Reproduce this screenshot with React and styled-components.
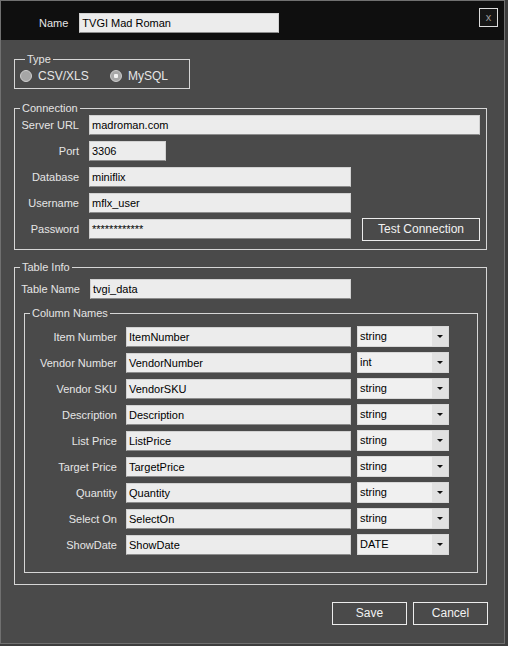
import React from 'react'
import styled, { createGlobalStyle } from 'styled-components'

const GlobalStyle = createGlobalStyle`
  html, body {
    margin: 0;
    padding: 0;
    background: #3d3d3d;
  }
  body {
    font-family: "Liberation Sans", Arial, sans-serif;
    font-size: 11px;
  }
`

const connection = [
  { label: 'Server URL', value: 'madroman.com', size: 'full' },
  { label: 'Port', value: '3306', size: 'small' },
  { label: 'Database', value: 'miniflix' },
  { label: 'Username', value: 'mflx_user' },
  { label: 'Password', value: '************', test: true },
]

const columns = [
  ['Item Number', 'ItemNumber', 'string'],
  ['Vendor Number', 'VendorNumber', 'int'],
  ['Vendor SKU', 'VendorSKU', 'string'],
  ['Description', 'Description', 'string'],
  ['List Price', 'ListPrice', 'string'],
  ['Target Price', 'TargetPrice', 'string'],
  ['Quantity', 'Quantity', 'string'],
  ['Select On', 'SelectOn', 'string'],
  ['ShowDate', 'ShowDate', 'DATE'],
]

const App = () => {
  return (
    <>
      <GlobalStyle />
      <Window>
        <Header>
          <NameField>
            <NameLabel>Name</NameLabel>
            <TextBox $width="200px">TVGI Mad Roman</TextBox>
          </NameField>
          <CloseButton>x</CloseButton>
        </Header>

        <Body>
          <Group $width="176px" $pad="3px 0 5px 5px">
            <Legend>Type</Legend>
            <RadioRow>
              <RadioOption>
                <RadioDot />
                CSV/XLS
              </RadioOption>
              <RadioOption>
                <RadioDot $checked />
                MySQL
              </RadioOption>
            </RadioRow>
          </Group>

          <Group $mt="12px" $pad="0 6px 10px 0">
            <Legend>Connection</Legend>
            <ConnGrid>
              {connection.map((row) => (
                <React.Fragment key={row.label}>
                  <FieldLabel>{row.label}</FieldLabel>
                  <TextBox
                    $span={row.size === 'full'}
                    $width={row.size === 'small' ? '77px' : undefined}
                  >
                    {row.value}
                  </TextBox>
                  {row.test && <OutlineButton $width="118px" $ml="1px">Test Connection</OutlineButton>}
                </React.Fragment>
              ))}
            </ConnGrid>
          </Group>

          <Group $mt="10px" $pad="5px 8px 11px 0">
            <Legend>Table Info</Legend>
            <TableNameRow>
              <FieldLabel $width="65px">Table Name</FieldLabel>
              <TextBox $width="261px">tvgi_data</TextBox>
            </TableNameRow>

            <Group $mt="7px" $ml="9px" $pad="6px 0 17px 0">
              <Legend>Column Names</Legend>
              <ColumnGrid>
                {columns.map(([label, value, type]) => (
                  <React.Fragment key={label}>
                    <FieldLabel $pr="3px">{label}</FieldLabel>
                    <TextBox>{value}</TextBox>
                    <Combo>
                      <ComboText>{type}</ComboText>
                      <ComboArrow />
                    </Combo>
                  </React.Fragment>
                ))}
              </ColumnGrid>
            </Group>
          </Group>

          <Footer>
            <OutlineButton $width="75px">Save</OutlineButton>
            <OutlineButton $width="75px">Cancel</OutlineButton>
          </Footer>
        </Body>
      </Window>
    </>
  )
}

const Window = styled.div`
  box-sizing: border-box;
  width: 505px;
  height: 644px;
  border: 1px solid #707070;
  background: #4a4a4a;
  display: flex;
  flex-direction: column;
`

const Header = styled.div`
  height: 39px;
  background: #0f0f0f;
  display: flex;
  align-items: flex-start;
  padding: 7px 6px 0 38px;
  box-sizing: border-box;
`

const NameField = styled.div`
  display: flex;
  align-items: center;
  gap: 11px;
  margin-top: 5px;
`

const NameLabel = styled.span`
  color: #e6e6e6;
  line-height: 20px;
`

const CloseButton = styled.div`
  margin-left: auto;
  box-sizing: border-box;
  width: 19px;
  height: 19px;
  border: 1px solid #dcdcdc;
  background: #161616;
  color: #9c9c9c;
  font-size: 11px;
  line-height: 16px;
  text-align: center;
`

const Body = styled.div`
  flex: 1;
  display: flex;
  flex-direction: column;
  padding: 12px 17px 0 13px;
`

const Group = styled.fieldset`
  margin: ${(p) => p.$mt || 0} 0 0 ${(p) => p.$ml || 0};
  padding: ${(p) => p.$pad || 0};
  width: ${(p) => p.$width || 'auto'};
  box-sizing: border-box;
  border: 1px solid #d6d6d6;
  border-radius: 0;
  min-width: 0;
`

const Legend = styled.legend`
  margin-left: 5px;
  padding: 0 2px;
  color: #e4e4e4;
  font-size: 11px;
  line-height: 14px;
`

const RadioRow = styled.div`
  display: flex;
  align-items: center;
  height: 14px;
`

const RadioOption = styled.label`
  display: flex;
  align-items: center;
  gap: 6px;
  min-width: 90px;
  color: #e6e6e6;
  font-size: 12px;
`

const RadioDot = styled.span`
  box-sizing: border-box;
  width: 12px;
  height: 12px;
  border-radius: 50%;
  border: 1px solid #cfcfcf;
  background: ${(p) =>
    p.$checked
      ? 'radial-gradient(circle, #f2f2f2 0 2px, #a8a8a8 2.5px)'
      : '#a6a6a6'};
`

const FieldLabel = styled.span`
  width: ${(p) => p.$width || 'auto'};
  padding-right: ${(p) => p.$pr || 0};
  color: #e6e6e6;
  text-align: right;
  white-space: nowrap;
`

const ConnGrid = styled.div`
  display: grid;
  grid-template-columns: 64px 262px 1fr;
  grid-auto-rows: 20px;
  column-gap: 10px;
  row-gap: 6px;
  align-items: center;

  & > ${FieldLabel} {
    grid-column: 1;
  }
`

const TextBox = styled.div`
  box-sizing: border-box;
  height: 20px;
  width: ${(p) => p.$width || 'auto'};
  grid-column: ${(p) => (p.$span ? 'span 2' : 'auto')};
  justify-self: ${(p) => (p.$width ? 'start' : 'stretch')};
  background: #ececec;
  border: 1px solid #d2d2d2;
  border-bottom-color: #8c8c8c;
  color: #000;
  padding: 0 2px;
  line-height: 18px;
  white-space: nowrap;
  overflow: hidden;
`

const OutlineButton = styled.div`
  box-sizing: border-box;
  width: ${(p) => p.$width};
  height: 23px;
  margin-left: ${(p) => p.$ml || 0};
  align-self: center;
  border: 1px solid #ececec;
  color: #f2f2f2;
  font-size: 12px;
  line-height: 21px;
  text-align: center;
`

const TableNameRow = styled.div`
  display: flex;
  align-items: center;
  gap: 10px;
`

const ColumnGrid = styled.div`
  display: grid;
  grid-template-columns: 95px 225px 92px;
  grid-auto-rows: 21px;
  column-gap: 6px;
  row-gap: 5px;
  align-items: center;
`

const Combo = styled.div`
  box-sizing: border-box;
  height: 21px;
  display: flex;
  background: #f0f0f0;
  border: 1px solid #d8d8d8;
`

const ComboText = styled.span`
  flex: 1;
  padding-left: 2px;
  line-height: 19px;
  color: #000;
`

const ComboArrow = styled.span`
  width: 16px;
  background: #e1e1e1;
  display: flex;
  align-items: center;
  justify-content: center;
  &::after {
    content: '';
    border-left: 3px solid transparent;
    border-right: 3px solid transparent;
    border-top: 3px solid #111;
  }
`

const Footer = styled.div`
  display: flex;
  justify-content: flex-end;
  gap: 6px;
  margin: 17px -1px 0 0;
`

export default App
